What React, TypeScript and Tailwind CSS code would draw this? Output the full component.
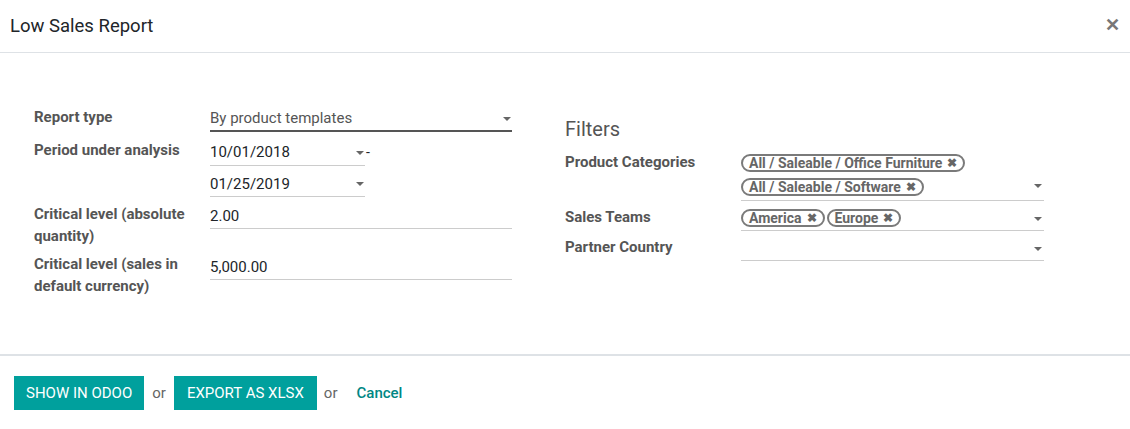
import React from 'react';

const Caret: React.FC = () => (
  <span className="inline-block w-0 h-0 border-l-[4px] border-r-[4px] border-t-[4px] border-l-transparent border-r-transparent border-t-[#666]" />
);

const Tag: React.FC<{ label: string }> = ({ label }) => (
  <span className="inline-flex items-center h-[18px] px-[6px] rounded-full border-2 border-[#7a7a7a] text-[14px] font-bold text-[#666] leading-none whitespace-nowrap">
    {label}
    <span className="ml-[5px] text-[12px] leading-none">✖</span>
  </span>
);

const Label: React.FC<{ children: React.ReactNode }> = ({ children }) => (
  <div className="w-[176px] shrink-0 pr-3 text-[15px] leading-[21.5px] font-bold text-[#555]">{children}</div>
);

const App: React.FC = () => {
  return (
    <div className="w-[1130px] h-[429px] bg-white text-[#212529] font-['Roboto',sans-serif] flex flex-col">
      {/* Header */}
      <div className="h-[53px] flex items-center justify-between pl-[10px] pr-[10px] border-b border-[#dee2e6] shrink-0">
        <h4 className="text-[18.5px] leading-none">Low Sales Report</h4>
        <span className="text-[#777] text-[18px] font-bold leading-none -mt-[3px]">✕</span>
      </div>

      {/* Body */}
      <div className="flex-1 flex pl-[34px] pt-[53px]">
        {/* Left group */}
        <div className="w-[478px] flex flex-col pt-[1px]">
          <div className="flex">
            <Label>Report type</Label>
            <div className="w-[302px] h-[25px] flex items-center justify-between border-b-2 border-[#555] pr-[1px] text-[15px] text-[#555]">
              <span>By product templates</span>
              <Caret />
            </div>
          </div>
          <div className="flex mt-[8px]">
            <Label>Period under analysis</Label>
            <div className="flex flex-col gap-[6px]">
              <div className="flex items-center">
                <div className="w-[155px] h-[26px] flex items-center justify-between border-b border-[#ccc] pr-[1px] text-[15px]">
                  <span>10/01/2018</span>
                  <Caret />
                </div>
                <span className="ml-[1px] text-[14px] -mt-[1px]">-</span>
              </div>
              <div className="w-[155px] h-[25px] flex items-center justify-between border-b border-[#ccc] pr-[1px] text-[15px]">
                <span>01/25/2019</span>
                <Caret />
              </div>
            </div>
          </div>
          <div className="flex mt-[7px]">
            <Label>
              Critical level (absolute
              <br />
              quantity)
            </Label>
            <div className="w-[302px] h-[25px] flex items-center border-b border-[#ccc] text-[15px]">2.00</div>
          </div>
          <div className="flex mt-[7px]">
            <Label>
              Critical level (sales in
              <br />
              default currency)
            </Label>
            <div className="w-[302px] h-[25px] mt-[1px] flex items-center border-b border-[#ccc] text-[15px]">5,000.00</div>
          </div>
        </div>

        {/* Right group */}
        <div className="ml-[53px] w-[479px] flex flex-col">
          <div className="text-[20px] leading-[24px] text-[#555] mt-[11px]">Filters</div>
          <div className="flex flex-col gap-[6px] mt-[11px]">
            <div className="flex">
              <Label>Product Categories</Label>
              <div className="w-[304px] border-b border-[#ccc] pt-[2px] pb-[4px] flex items-end justify-between pr-[2px]">
                <div className="flex flex-col items-start gap-[6px]">
                  <Tag label="All / Saleable / Office Furniture" />
                  <Tag label="All / Saleable / Software" />
                </div>
                <span className="mb-[8px] flex"><Caret /></span>
              </div>
            </div>
            <div className="flex">
              <Label>Sales Teams</Label>
              <div className="w-[304px] h-[24px] border-b border-[#ccc] pt-[2px] flex items-start justify-between pr-[2px]">
                <div className="flex gap-[2px]">
                  <Tag label="America" />
                  <Tag label="Europe" />
                </div>
                <span className="mt-[8px] flex"><Caret /></span>
              </div>
            </div>
            <div className="flex">
              <Label>Partner Country</Label>
              <div className="w-[304px] h-[24px] border-b border-[#ccc] flex items-center justify-end pr-[2px]">
                <Caret />
              </div>
            </div>
          </div>
        </div>
      </div>

      {/* Footer */}
      <div className="h-[75px] shrink-0 border-t-2 border-[#dee2e6] flex items-center pl-[14px] pt-[1px]">
        <button className="h-[34px] px-[12px] bg-[#00a09d] text-white text-[15px] uppercase">Show in Odoo</button>
        <span className="mx-[8px] text-[15px] text-[#666]">or</span>
        <button className="h-[34px] px-[13px] bg-[#00a09d] text-white text-[15px] uppercase">Export as XLSX</button>
        <span className="ml-[7px] text-[15px] text-[#666]">or</span>
        <span className="ml-[19px] text-[15px] font-medium text-[#008784]">Cancel</span>
      </div>
    </div>
  );
};

export default App;
